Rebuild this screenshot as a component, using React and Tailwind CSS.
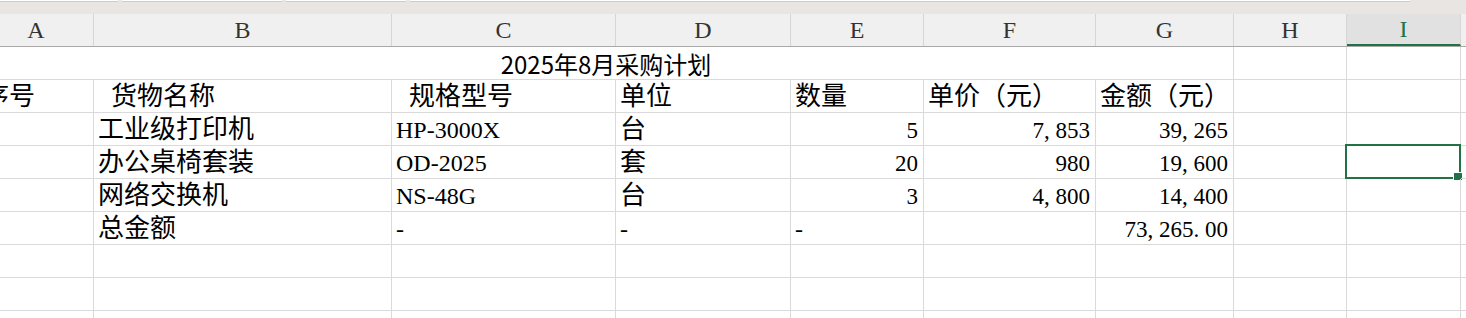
import React from 'react';

const cjk = "font-['Noto_Sans_CJK_SC',sans-serif]";
const serif = "font-['Liberation_Serif','Noto_Sans_CJK_SC',serif]";

// column widths include the 1px right grid line; A is partly scrolled off
const cols = [
  { key: 'A', w: 'w-[115px]' },
  { key: 'B', w: 'w-[298px]' },
  { key: 'C', w: 'w-[224px]' },
  { key: 'D', w: 'w-[175px]' },
  { key: 'E', w: 'w-[133px]' },
  { key: 'F', w: 'w-[172px]' },
  { key: 'G', w: 'w-[138px]' },
  { key: 'H', w: 'w-[113px]' },
  { key: 'I', w: 'w-[114px]' },
  { key: '', w: 'w-[80px]' },
];

const rows = [
  ['序号', '  货物名称', '  规格型号', '单位', '数量', '单价（元）', '金额（元）'],
  ['', '工业级打印机', 'HP-3000X', '台', 5, '7,853', '39,265'],
  ['', '办公桌椅套装', 'OD-2025', '套', 20, '980', '19,600'],
  ['', '网络交换机', 'NS-48G', '台', 3, '4,800', '14,400'],
  ['', '总金额', '-', '-', '-', '', '73,265.00'],
  [],
  [],
  [],
];

const hasCjk = (s) => /[\u3000-\u9fff\uff00-\uffef]/.test(String(s));

// half-width separators, the way the sheet's font draws them
function Num({ value }) {
  return (
    <span className={`${serif} text-[23px] leading-[25px] text-black`}>
      {String(value).split('').map((ch, i) =>
        ch === ',' || ch === '.' ? (
          <span key={i} className="inline-block w-[0.5em]">{ch}</span>
        ) : (
          <span key={i}>{ch}</span>
        )
      )}
    </span>
  );
}

function Cell({ col, value, rowIdx }) {
  const isNum = col >= 4 && col <= 6 && value !== '' && value !== undefined && value !== '-' && rowIdx > 0;
  const selected = col === 8 && rowIdx === 2;
  return (
    <div
      className={`${cols[col].w} relative flex h-[33px] shrink-0 items-end border-r border-b border-[#dadada] pb-[2px] ${
        isNum ? 'justify-end pr-[5px]' : 'justify-start pl-[4px]'
      }`}
    >
      {value !== undefined && value !== '' && (
        isNum ? (
          <Num value={value} />
        ) : hasCjk(value) ? (
          <span className={`${serif} whitespace-pre text-[26px] leading-[26px] text-black`}>{value}</span>
        ) : (
          <span className={`${serif} whitespace-pre text-[24px] leading-[26px] text-black`}>{value}</span>
        )
      )}
      {selected && (
        <div className="absolute -left-[2px] -top-[2px] h-[35px] w-[116px] border-2 border-[#217346]">
          <div className="absolute left-[107px] top-[27px] h-[7px] w-[8px] bg-[#217346] outline outline-1 outline-white" />
        </div>
      )}
    </div>
  );
}

export default function App() {
  return (
    <div className="h-[318px] w-[1466px] overflow-hidden bg-white">
      {/* sheet tab strip */}
      <div className="flex h-[14px] items-start bg-[#e9e5e3]">
        <div className="h-[2px] w-[118px] border-b border-[#cfcac8] bg-white" />
        <div className="ml-[4px] h-[2px] w-[160px] border-b border-[#cfcac8] bg-white" />
        <div className="ml-[4px] h-[2px] w-[120px] border-b border-[#cfcac8] bg-white" />
        <div className="ml-[4px] h-[2px] w-[1000px] border-b border-[#cfcac8] bg-white" />
      </div>

      <div className="-ml-[21px]">
        {/* column letters */}
        <div className="flex h-[33px] border-b border-[#a9a9a9] bg-[#f0f0f0]">
          {cols.map((c, i) =>
            c.key === 'I' ? (
              <div
                key={i}
                className={`${c.w} flex h-[32px] shrink-0 items-center justify-center border-r border-b-2 border-r-[#d6d6d6] border-b-[#217346] bg-[#e1e1e1] ${serif} text-[24px] text-[#217346]`}
              >
                {c.key}
              </div>
            ) : (
              <div
                key={i}
                className={`${c.w} flex h-[32px] shrink-0 items-center justify-center border-r border-[#d6d6d6] ${serif} text-[24px] text-[#333]`}
              >
                {c.key}
              </div>
            )
          )}
        </div>

        {/* row 1: merged title A:G */}
        <div className="flex h-[33px]">
          <div className="flex w-[1255px] shrink-0 items-end justify-center border-r border-b border-[#dadada] pb-[3px]">
            <span className={`${cjk} text-[24px] leading-[25px] text-black`}>2025年8月采购计划</span>
          </div>
          <div className="h-[33px] w-[113px] shrink-0 border-r border-b border-[#dadada]" />
          <div className="h-[33px] w-[114px] shrink-0 border-r border-b border-[#dadada]" />
          <div className="h-[33px] w-[80px] shrink-0 border-b border-[#dadada]" />
        </div>

        {rows.map((r, ri) => (
          <div key={ri} className="flex">
            {cols.map((c, ci) => (
              <Cell key={ci} col={ci} value={r[ci]} rowIdx={ri} />
            ))}
          </div>
        ))}
      </div>
    </div>
  );
}
